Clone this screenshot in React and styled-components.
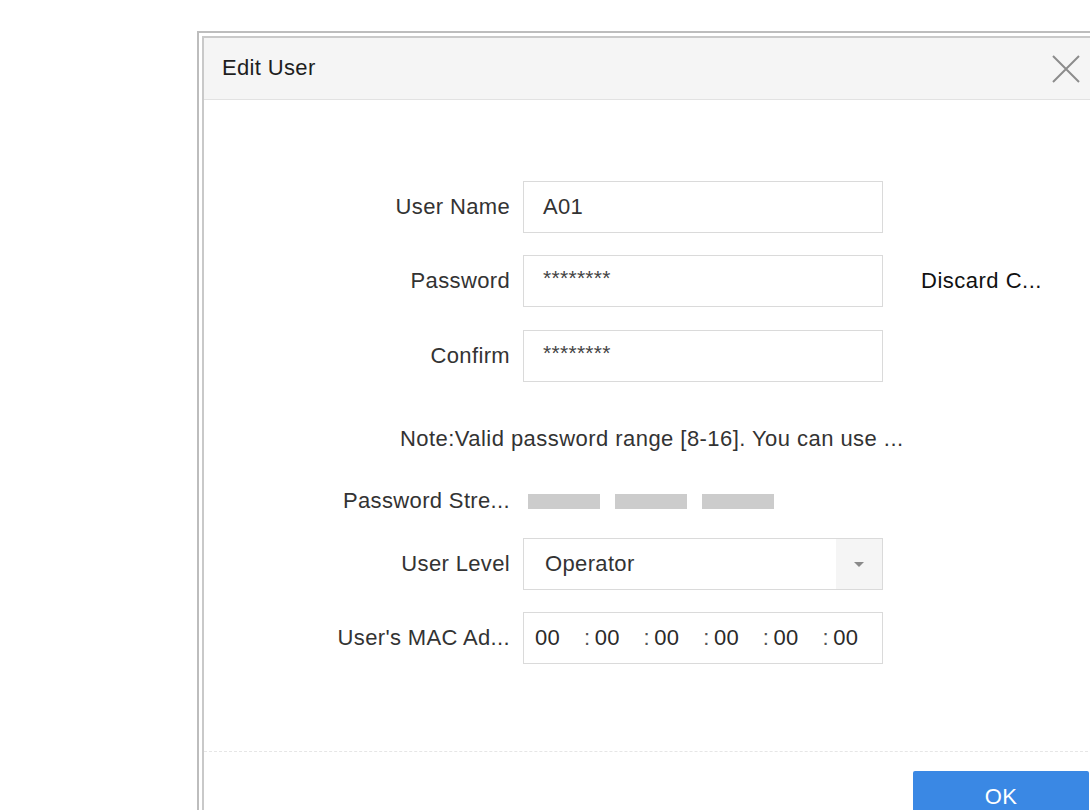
import * as React from "react";
import styled, { createGlobalStyle } from "styled-components";

const GlobalStyle = createGlobalStyle`
  html, body {
    margin: 0;
    padding: 0;
    background: #ffffff;
    overflow: hidden;
  }
  body {
    font-family: "Liberation Sans", Arial, sans-serif;
    color: #333333;
    letter-spacing: 0.35px;
  }
`;

const Page = styled.div`
  box-sizing: border-box;
  width: 1090px;
  height: 810px;
  padding: 31px 0 0 197px;
  overflow: hidden;
`;

const Frame = styled.div`
  box-sizing: border-box;
  width: 923px;
  border: 2px solid #bdbdbd;
  padding: 3px;
`;

const Dialog = styled.div`
  box-sizing: border-box;
  border: 2px solid #c9c9c9;
  background: #ffffff;
`;

const Header = styled.div`
  box-sizing: border-box;
  display: flex;
  align-items: center;
  justify-content: space-between;
  height: 62px;
  padding: 0 33px 0 18px;
  background: #f5f5f5;
  border-bottom: 1px solid #e2e2e2;
`;

const Title = styled.h1`
  margin: 0;
  font-size: 22px;
  font-weight: normal;
  color: #1e1e1e;
  transform: translateY(-1px);
`;

const CloseButton = styled.button`
  all: unset;
  display: flex;
  width: 28px;
  height: 28px;
  cursor: pointer;
`;

const Body = styled.div`
  box-sizing: border-box;
  padding: 81px 0 87px 131px;
`;

const Row = styled.div`
  display: flex;
  align-items: center;
  height: ${(p) => p.$height || 52}px;
  margin-top: ${(p) => p.$gap || 0}px;
`;

const Label = styled.label`
  box-sizing: border-box;
  width: 175px;
  flex: none;
  font-size: 22px;
  color: #333333;
  text-align: right;
  white-space: nowrap;
`;

const Field = styled.div`
  box-sizing: border-box;
  display: flex;
  align-items: center;
  width: 360px;
  height: 52px;
  margin-left: 13px;
  flex: none;
  border: 1px solid #dadada;
  background: #ffffff;
  font-size: 22px;
  color: #333333;
  padding-left: ${(p) => p.$pad ?? 19}px;
  overflow: hidden;
`;

const Masked = styled.span`
  font-size: 21px;
  letter-spacing: 0.3px;
  color: #444444;
  transform: translateY(-3px);
`;

const SideAction = styled.button`
  all: unset;
  margin-left: 38px;
  font-size: 22px;
  letter-spacing: 0.5px;
  color: #111111;
  cursor: pointer;
  white-space: nowrap;
`;

const Note = styled.p`
  margin: 0 0 0 65px;
  font-size: 22px;
  letter-spacing: 0.45px;
  color: #333333;
  white-space: nowrap;
`;

const Bars = styled.div`
  display: flex;
  gap: 15px;
  margin-left: 18px;
`;

const Bar = styled.span`
  display: block;
  width: 72px;
  height: 15px;
  background: ${(p) => (p.$on ? "#f0a23c" : "#cccccc")};
`;

const SelectValue = styled.span`
  flex: 1;
`;

const Caret = styled.span`
  display: flex;
  align-items: center;
  justify-content: center;
  align-self: stretch;
  width: 46px;
  background: #f5f5f5;

  &::after {
    content: "";
    border-left: 5px solid transparent;
    border-right: 5px solid transparent;
    border-top: 5px solid #8a8a8a;
  }
`;

const Octet = styled.span`
  display: inline-block;
  width: 50px;
  color: #2a2a2a;
`;

const Colon = styled.span`
  display: inline-block;
  width: 11px;
  color: #555555;
`;

const Footer = styled.div`
  display: flex;
  justify-content: flex-end;
  padding: 19px 24px 20px 0;
  border-top: 1px dashed #e6e6e6;
`;

const PrimaryButton = styled.button`
  all: unset;
  box-sizing: border-box;
  width: 176px;
  height: 52px;
  border-radius: 2px;
  background: #3a88e4;
  color: #ffffff;
  font-family: "Liberation Sans", Arial, sans-serif;
  font-size: 22px;
  text-align: center;
  line-height: 52px;
  cursor: pointer;
`;

function CloseIcon() {
  return (
    <svg width="28" height="28" viewBox="0 0 28 28">
      <path d="M1 1 L27 27 M27 1 L1 27" stroke="#8c8c8c" strokeWidth="2" fill="none" />
    </svg>
  );
}

function MacField({ value }) {
  const parts = value.split(":");
  return (
    <Field $pad={11}>
      {parts.map((part, i) => (
        <React.Fragment key={i}>
          {i > 0 && <Colon>:</Colon>}
          <Octet>{part}</Octet>
        </React.Fragment>
      ))}
    </Field>
  );
}

export default function App() {
  return (
    <Page>
      <GlobalStyle />
      <Frame>
        <Dialog>
          <Header>
            <Title>Edit User</Title>
            <CloseButton aria-label="Close">
              <CloseIcon />
            </CloseButton>
          </Header>
          <Body>
            <Row>
              <Label>User Name</Label>
              <Field>A01</Field>
            </Row>
            <Row $gap={22}>
              <Label>Password</Label>
              <Field>
                <Masked>********</Masked>
              </Field>
              <SideAction>Discard C...</SideAction>
            </Row>
            <Row $gap={23}>
              <Label>Confirm</Label>
              <Field>
                <Masked>********</Masked>
              </Field>
            </Row>
            <Row $gap={42} $height={30}>
              <Note>Note:Valid password range [8-16]. You can use ...</Note>
            </Row>
            <Row $gap={32} $height={30}>
              <Label>Password Stre...</Label>
              <Bars>
                <Bar />
                <Bar />
                <Bar />
              </Bars>
            </Row>
            <Row $gap={22}>
              <Label>User Level</Label>
              <Field $pad={21}>
                <SelectValue>Operator</SelectValue>
                <Caret />
              </Field>
            </Row>
            <Row $gap={22}>
              <Label>User's MAC Ad...</Label>
              <MacField value="00:00:00:00:00:00" />
            </Row>
          </Body>
          <Footer>
            <PrimaryButton>OK</PrimaryButton>
          </Footer>
        </Dialog>
      </Frame>
    </Page>
  );
}
